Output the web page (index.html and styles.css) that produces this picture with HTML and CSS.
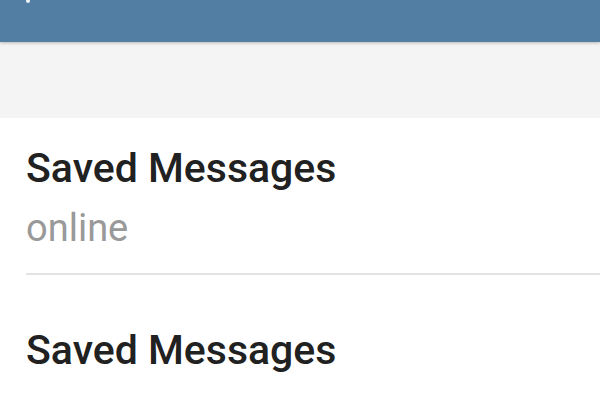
FILE: index.html
```html
<!DOCTYPE html>
<html lang="en">

<head>
    <meta charset="UTF-8">
    <meta name="viewport" content="width=device-width, initial-scale=1.0">
    <title>Saved Messages</title>
    <link rel="stylesheet" href="styles.css">
</head>

<body>
    <!-- top bar, cut off at the top -->
    <div class="topbar">
        <span class="dot"></span>
    </div>
    <div class="spacer"></div>
    <div class="list">
        <div class="item">
            <div class="title">Saved Messages</div>
            <div class="status">online</div>
        </div>
        <div class="item item-single">
            <div class="title">Saved Messages</div>
        </div>
    </div>
</body>

</html>
```

FILE: styles.css
```css
body {
    margin: 0;
    background-color: #fff;
    font-family: Roboto, "Noto Sans", sans-serif;
    overflow: hidden;
}

.topbar {
    position: relative;
    height: 42px;
    background-color: #527ea4;
    box-shadow: 0 1px 3px rgba(0, 0, 0, 0.25);
    z-index: 1;
}

.dot {
    position: absolute;
    left: 26px;
    top: 0;
    width: 4px;
    height: 3px;
    background-color: #e8f0f8;
    border-radius: 0 0 2px 2px;
}

.spacer {
    height: 76px;
    background-color: #f4f4f4;
}

.item {
    margin-left: 26px;
    padding: 26px 0 21px;
    border-bottom: 2px solid #e3e3e3;
}

.item-single {
    padding: 51px 0 30px;
}

.title {
    font-size: 41px;
    font-weight: 500;
    color: #212121;
    line-height: 48px;
}

.status {
    margin-top: 12px;
    font-size: 38px;
    color: #999;
    line-height: 48px;
}
```
